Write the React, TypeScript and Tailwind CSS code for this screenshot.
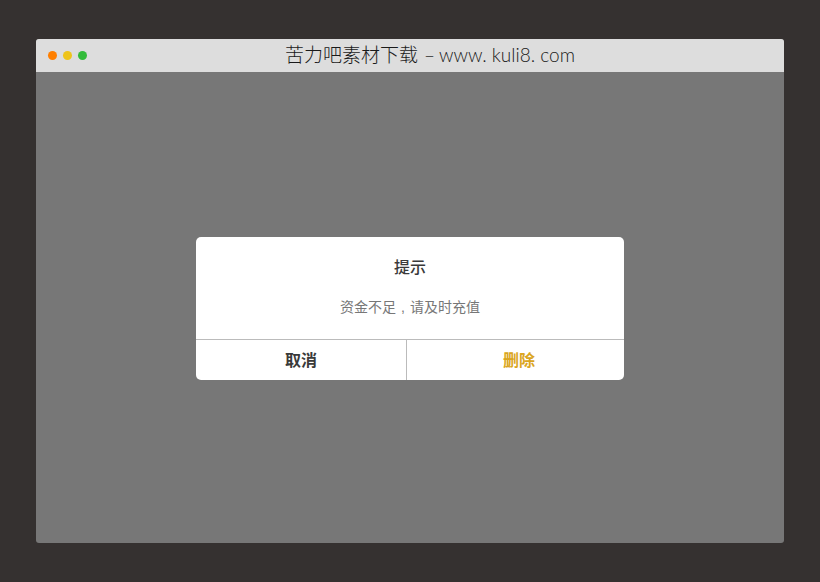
export default function App() {
  const cjk = "font-['Liberation_Sans','Noto_Sans_CJK_SC',sans-serif]";
  return (
    <div className={`h-[582px] w-[820px] overflow-hidden bg-[#353130] px-9 py-[39px] ${cjk}`}>
      <div className="flex h-[504px] w-[748px] flex-col overflow-hidden rounded-[3px] bg-[#777777]">
        <div className="flex h-[33px] shrink-0 items-center bg-[#dddddd] pl-3">
          <div className="flex gap-[6px]">
            <span className="h-[9px] w-[9px] rounded-full bg-[#ff7f00]" />
            <span className="h-[9px] w-[9px] rounded-full bg-[#eec41b]" />
            <span className="h-[9px] w-[9px] rounded-full bg-[#33bb3a]" />
          </div>
          <div className="ml-[198px] flex items-baseline whitespace-nowrap pb-[2px] font-['Lato','Noto_Sans_CJK_SC',sans-serif] text-[19px] font-light leading-[24px] text-[#1a1a1a]">
            <span>苦力吧素材下载</span>
            <span className="ml-[6px]">–</span>
            <span className="ml-[4px]">www. kuli8. com</span>
          </div>
        </div>
        <div className="flex flex-1 items-center justify-center pt-[2px]">
          <div className="flex h-[143px] w-[428px] flex-col overflow-hidden rounded-[5px] bg-white">
            <div className="flex h-[103px] flex-col items-center border-b border-[#bbbbbb]">
              <div className="mt-[19px] text-[16px] font-medium leading-[24px] text-[#3a3a3a]">提示</div>
              <div className="mt-[16px] text-[14px] leading-[22px] text-[#777777]">
                资金不足<span className="inline-block w-[14px] text-center">,</span>请及时充值
              </div>
            </div>
            <div className="flex h-[40px] pt-[2px]">
              <div className="flex w-[210px] items-center justify-center text-[16px] font-bold text-[#3a3a3a]">
                取消
              </div>
              <div className="-mt-[2px] w-px bg-[#bbbbbb]" />
              <div className="flex flex-1 items-center justify-center pl-[7px] text-[16px] font-bold text-[#daa520]">
                删除
              </div>
            </div>
          </div>
        </div>
      </div>
    </div>
  );
}
